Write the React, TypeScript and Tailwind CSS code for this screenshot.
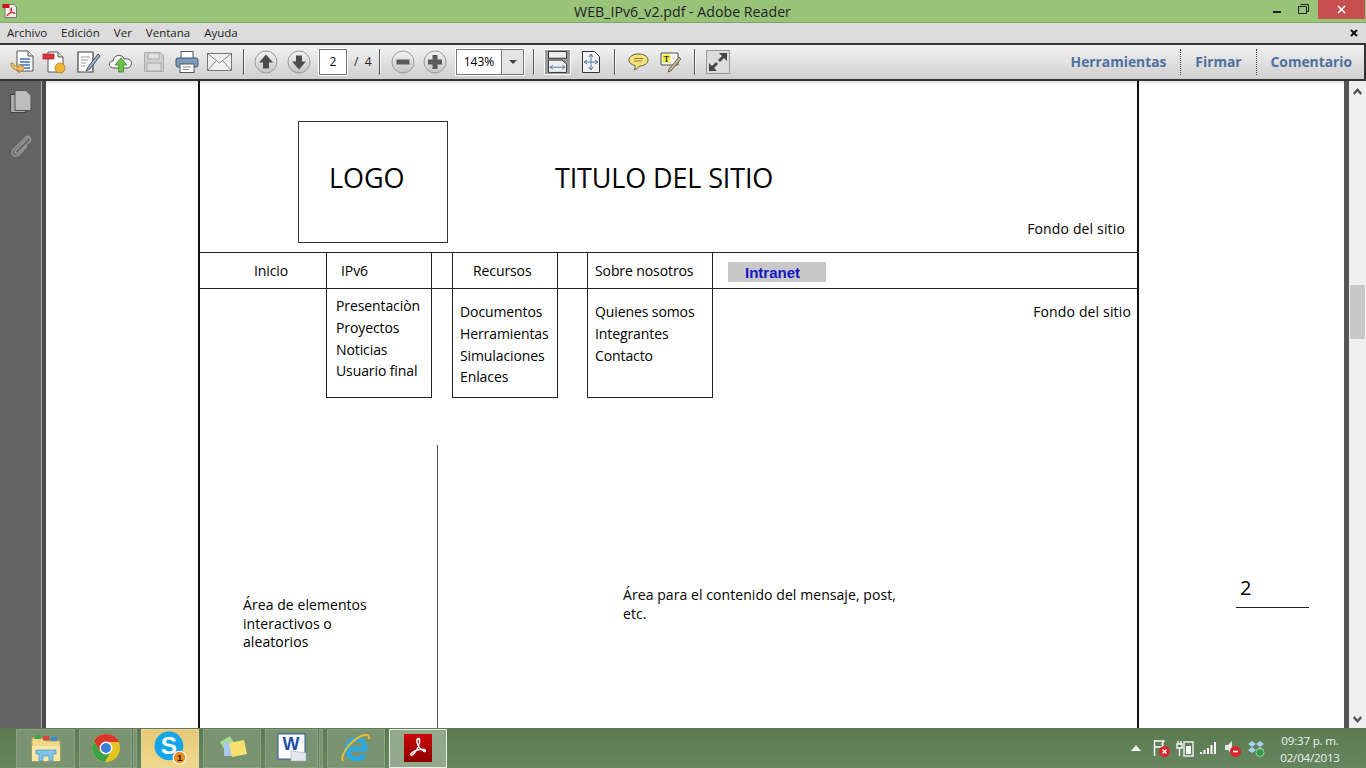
import React from "react";

const uiFont = "font-['Open_Sans','Noto_Sans',sans-serif]";

const AcrobatMark = ({ size = 24 }: { size?: number }) => (
  <svg width={size} height={size} viewBox="0 0 22 22">
    <path d="M12.500 3c.5 4-2.500 11-6 14-1.500 1.200-3 .3-1.500-1.200 3-2.800 9-4.500 12-3.300 1.500.6 1 2-.5 1.500-3-1-6-5-6.500-8.500-.2-2 .5-3 1.200-3.200.5-.1.700.2.800.700Z" fill="none" stroke="#fff" strokeWidth="1.300" />
  </svg>
);

const Sep = ({ className = "" }: { className?: string }) => (
  <div className={`h-[26px] w-[2px] shrink-0 border-l border-l-[#555] bg-white/70 ${className}`} />
);

const RoundBtn = ({ kind }: { kind: "up" | "down" | "minus" | "plus" }) => (
  <svg width="24" height="24" viewBox="0 0 24 24">
    <defs>
      <linearGradient id="rb" x1="0" y1="0" x2="0" y2="1">
        <stop offset="0" stopColor="#f4f4f4" />
        <stop offset="1" stopColor="#c4c4c4" />
      </linearGradient>
    </defs>
    <circle cx="12" cy="12" r="11" fill="url(#rb)" stroke="#9a9a9a" />
    {kind === "up" && <path d="M12 4.500 19 12.500h-4v6H9v-6H5Z" fill="#4c4c4c" />}
    {kind === "down" && <path d="M12 19.500 5 11.500h4v-6h6v6h4Z" fill="#4c4c4c" />}
    {kind === "minus" && <rect x="5.500" y="9.500" width="13" height="5" fill="#5a5a5a" />}
    {kind === "plus" && <path d="M9.500 5h5v4.500H19v5h-4.500V19h-5v-4.500H5v-5h4.500Z" fill="#5a5a5a" />}
  </svg>
);

const ToolIcon = ({ children, w = 33 }: { children: React.ReactNode; w?: number }) => (
  <div className="flex shrink-0 items-center justify-center" style={{ width: w }}>
    {children}
  </div>
);

const Toolbar = () => (
  <div className={`flex h-[38px] shrink-0 items-center border-y-2 border-r-2 border-[#333] bg-gradient-to-b from-[#f2f2f2] to-[#cfcfcf] pl-[5px] ${uiFont}`}>
    <ToolIcon>
      <svg width="26" height="26" viewBox="0 0 26 26">
        <path d="M8 2h11l5 5v15H8Z" fill="#fff" stroke="#555" />
        <path d="M19 2v5h5" fill="#ddd" stroke="#555" />
        <path d="M11 10h10M11 13h10M11 16h10M11 19h10" stroke="#3a6fc0" strokeWidth="1.300" />
        <path d="M2 14c0 5 3 7 8 7v3l6-5-6-4v3c-3 0-5-1-6-4Z" fill="#eebc5a" stroke="#a8782a" strokeWidth=".8" />
      </svg>
    </ToolIcon>
    <ToolIcon>
      <svg width="26" height="26" viewBox="0 0 26 26">
        <path d="M6 3h10l5 5v15H6Z" fill="#fff" stroke="#555" />
        <path d="M16 3v5h5" fill="#ddd" stroke="#555" />
        <rect x="1" y="5" width="11" height="5" fill="#e0333c" stroke="#9b1c22" strokeWidth=".7" />
        <circle cx="18" cy="19" r="5" fill="#efb53a" stroke="#b67f1d" strokeWidth=".8" />
      </svg>
    </ToolIcon>
    <ToolIcon>
      <svg width="26" height="26" viewBox="0 0 26 26">
        <path d="M3 3h15v20H3Z" fill="#fff" stroke="#444" strokeWidth="1.200" />
        <path d="M6 8h9M6 11h7M6 14h5M6 17h4" stroke="#999" />
        <path d="M23 5 13 18l-2 4 4-2L25 7Z" fill="#8fb0d8" stroke="#444" strokeWidth=".9" />
      </svg>
    </ToolIcon>
    <ToolIcon>
      <svg width="26" height="24" viewBox="0 0 26 24">
        <path d="M6 18c-6 0-6-7-1-7 0-6 9-8 11-2 5-1 9 2 7 6-.5 2-2 3-4 3Z" fill="#f5f5f5" stroke="#555" />
        <path d="M13 8l6 7h-3.500v7h-5v-7H7Z" fill="#6cc04a" stroke="#3f8a2a" strokeWidth=".8" />
      </svg>
    </ToolIcon>
    <ToolIcon>
      <svg width="22" height="22" viewBox="0 0 22 22">
        <path d="M1.500 1.500h16l3 3v16h-19Z" fill="#d0d0d0" stroke="#aaa" />
        <rect x="5" y="2" width="11" height="6" fill="#e2e2e2" stroke="#aaa" />
        <rect x="4" y="12" width="14" height="8" fill="#dcdcdc" stroke="#aaa" />
      </svg>
    </ToolIcon>
    <ToolIcon>
      <svg width="24" height="24" viewBox="0 0 24 24">
        <rect x="6" y="1.500" width="12" height="7" fill="#fff" stroke="#555" />
        <rect x="1" y="8" width="22" height="9" rx="2" fill="#7c9cc0" stroke="#44576e" />
        <rect x="5" y="14" width="14" height="8.500" fill="#fff" stroke="#555" />
        <path d="M8 17h8M8 19.500h6" stroke="#888" />
      </svg>
    </ToolIcon>
    <ToolIcon>
      <svg width="25" height="18" viewBox="0 0 25 18">
        <rect x=".5" y=".5" width="24" height="17" fill="#f0f0f0" stroke="#777" />
        <path d="M1 1l11.500 9L24 1M1 17l8-9M24 17l-8-9" fill="none" stroke="#888" />
      </svg>
    </ToolIcon>
    <Sep className="ml-[7px] mr-[4px]" />
    <ToolIcon><RoundBtn kind="up" /></ToolIcon>
    <ToolIcon><RoundBtn kind="down" /></ToolIcon>
    <div className="ml-[4px] flex h-[26px] w-[28px] shrink-0 items-center justify-center border border-[#777] bg-white text-[12px] text-black outline outline-1 outline-white">2</div>
    <div className="ml-[7px] w-[20px] shrink-0 text-[12px] text-[#222]">/&nbsp; 4</div>
    <Sep className="ml-[5px] mr-[6px]" />
    <ToolIcon w={32}><RoundBtn kind="minus" /></ToolIcon>
    <ToolIcon w={32}><RoundBtn kind="plus" /></ToolIcon>
    <div className="ml-[5px] flex h-[26px] w-[68px] shrink-0 border border-[#777] bg-white text-[12px] text-black outline outline-1 outline-white">
      <div className="flex flex-1 items-center justify-center">143%</div>
      <div className="flex w-[22px] items-center justify-center border-l border-l-[#777] bg-[#e4e4e4]">
        <div className="h-0 w-0 border-x-[4px] border-t-[4px] border-x-transparent border-t-[#444]" />
      </div>
    </div>
    <Sep className="mx-[9px]" />
    <div className="flex h-[26px] w-[27px] shrink-0 items-center justify-center border border-white bg-[#9a9a9a]">
      <svg width="19" height="22" viewBox="0 0 20 23">
        <rect x=".5" y=".5" width="19" height="7" fill="#eee" stroke="#333" />
        <path d="M.5 9.500h14l5 4v9H.5Z" fill="#eee" stroke="#333" />
        <path d="M2 17h16M2 17l3-2M2 17l3 2M18 17l-3-2M18 17l-3 2" stroke="#5577aa" />
      </svg>
    </div>
    <ToolIcon w={40}>
      <svg width="18" height="22" viewBox="0 0 18 22">
        <path d="M.5.500h12l5 5v16H.5Z" fill="#f2f2f2" stroke="#333" />
        <path d="M9 3v16M2 11h14M9 3 7 6M9 3l2 3M9 19l-2-3M9 19l2-3M2 11l3-2M2 11l3 2M16 11l-3-2M16 11l-3 2" stroke="#5577aa" />
      </svg>
    </ToolIcon>
    <Sep className="ml-[3px] mr-[2px]" />
    <ToolIcon w={40}>
      <svg width="21" height="18" viewBox="0 0 21 18">
        <path d="M10.500 1C16 1 20 3.500 20 7s-4 6-8.500 6c-1.500 2-3.500 3.500-5.500 4 1-1.500 1.500-3 1-4.500C3 11.500 1 9.500 1 7c0-3.500 4-6 9.500-6Z" fill="#f5e27a" stroke="#5a5a40" />
        <path d="M6 5.500h9M6 8h8" stroke="#8a7a30" />
      </svg>
    </ToolIcon>
    <ToolIcon w={26}>
      <svg width="22" height="22" viewBox="0 0 22 22">
        <path d="M1 2h17v12H1Z" fill="#f4f4f4" stroke="#555" />
        <rect x="2.500" y="3.500" width="8" height="8" fill="#f6ee3c" />
        <text x="6.500" y="10.500" fontSize="8" fontWeight="700" textAnchor="middle" fill="#222" fontFamily="Liberation Serif">T</text>
        <path d="M19 6 9 18l-1 3 3-1L21 8Z" fill="#c9b28a" stroke="#555" strokeWidth=".8" />
      </svg>
    </ToolIcon>
    <Sep className="ml-[10px] mr-[10px]" />
    <div className="flex h-[24px] w-[24px] shrink-0 items-center justify-center border border-[#999] bg-[#dcdcdc]">
      <svg width="20" height="20" viewBox="0 0 20 20">
        <path d="M19 1v8l-3-3-4 4-2-2 4-4-3-3ZM1 19v-8l3 3 4-4 2 2-4 4 3 3Z" fill="#444" />
      </svg>
    </div>
    <div className="ml-auto flex items-center text-[13.800px] font-bold text-[#4f6f9f]">
      <span>Herramientas</span>
      <div className="ml-[14px] h-[26px] border-l border-dotted border-[#444]" />
      <span className="ml-[14px]">Firmar</span>
      <div className="ml-[14px] h-[26px] border-l border-dotted border-[#444]" />
      <span className="ml-[14px] mr-[12px]">Comentario</span>
    </div>
  </div>
);

const ListItem = ({ children }: { children: React.ReactNode }) => (
  <div className="h-[21.800px] leading-[22px]">{children}</div>
);

const PdfPage = () => (
  <div className="h-[700px] w-[941px] shrink-0 border-x-2 border-[#111] text-[14px] tracking-[-0.1px] text-black font-['Open_Sans',sans-serif]">
    <div className="flex h-[171px] pl-[98px] pt-[40px]">
      <div className="flex h-[122px] w-[150px] shrink-0 items-center border border-[#333] pb-[8px] pl-[30px] text-[27px]">LOGO</div>
      <div className="ml-[107px] mt-[39px] text-[27px] leading-[36px] tracking-[-0.15px]">TITULO DEL SITIO</div>
      <div className="ml-auto mr-[12px] mt-[98px] leading-[20px] tracking-[0.15px]">Fondo del sitio</div>
    </div>
    <div className="flex h-[37px] border-y border-[#222] leading-[35px]">
      <div className="w-[126px] shrink-0 pl-[54px]">Inicio</div>
      <div className="w-[106px] shrink-0 border-x border-[#222] pl-[14px]">IPv6</div>
      <div className="ml-[20px] w-[106px] shrink-0 border-x border-[#222] pl-[20px]">Recursos</div>
      <div className="ml-[29px] w-[126px] shrink-0 border-x border-[#222] pl-[7px]">Sobre nosotros</div>
      <div className="ml-[15px] mt-[9px] flex h-[20px] w-[98px] items-center bg-[#c8c8c8] pl-[17px] text-[15px] font-bold tracking-normal text-[#1414c8] font-['Liberation_Sans',sans-serif]">Intranet</div>
    </div>
    <div className="flex h-[109px]">
      <div className="ml-[126px] w-[106px] shrink-0 border-x border-b border-[#222] pl-[9px] pt-[6px]">
        <ListItem>Presentaciòn</ListItem>
        <ListItem>Proyectos</ListItem>
        <ListItem>Noticias</ListItem>
        <ListItem>Usuario final</ListItem>
      </div>
      <div className="ml-[20px] w-[106px] shrink-0 border-x border-b border-[#222] pl-[7px] pt-[12px]">
        <ListItem>Documentos</ListItem>
        <ListItem>Herramientas</ListItem>
        <ListItem>Simulaciones</ListItem>
        <ListItem>Enlaces</ListItem>
      </div>
      <div className="ml-[29px] w-[126px] shrink-0 border-x border-b border-[#222] pl-[7px] pt-[12px]">
        <ListItem>Quienes somos</ListItem>
        <ListItem>Integrantes</ListItem>
        <ListItem>Contacto</ListItem>
      </div>
      <div className="ml-auto mr-[6px] pt-[13px] leading-[20px] tracking-[0.15px]">Fondo del sitio</div>
    </div>
    <div className="mt-[47px] flex h-[300px] tracking-[0.07px]">
      <div className="w-[238px] shrink-0 border-r border-[#555] pl-[43px] pt-[151px] leading-[18.500px]">
        Área de elementos
        <br />
        interactivos o
        <br />
        aleatorios
      </div>
      <div className="pl-[185px] pt-[140px] leading-[19px]">
        Área para el contenido del mensaje, post,
        <br />
        etc.
      </div>
    </div>
  </div>
);

const Scrollbar = () => (
  <div className="flex w-[17px] shrink-0 flex-col items-center bg-[#f0f0f0] pb-[5px] pt-[7px]">
    <svg width="9" height="7" viewBox="0 0 9 7">
      <path d="M4.500 0 9 5 7.500 7 4.500 3.500 1.500 7 0 5Z" fill="#555" />
    </svg>
    <div className="mt-[190px] h-[54px] w-[15px] bg-[#c8c8c8]" />
    <svg className="mt-auto" width="9" height="7" viewBox="0 0 9 7">
      <path d="M4.500 7 9 2 7.500 0 4.500 3.500 1.500 0 0 2Z" fill="#555" />
    </svg>
  </div>
);

const TaskBtn = ({ children, w, stacked, variant = "normal" }: { children: React.ReactNode; w: number; stacked?: boolean; variant?: "normal" | "alert" | "active" }) => {
  const cls =
    variant === "alert"
      ? "border-[#e8d79a] bg-gradient-to-b from-[#e6c878] to-[#f0d88e]"
      : variant === "active"
      ? "border-[#e8efe4] bg-[#93a88c]"
      : "border-[#8aa184] bg-[#7a9472]";
  return (
    <div className="flex h-[39px] shrink-0 gap-[1px]">
      <div className={`flex h-full items-center justify-center border ${cls}`} style={{ width: w }}>
        {children}
      </div>
      {stacked && <div className="h-full w-[4px] border border-[#8aa184] bg-[#7a9472]" />}
    </div>
  );
};

const Taskbar = () => (
  <div className={`flex h-[40px] shrink-0 items-center bg-gradient-to-b from-[#5a7a50] to-[#668660] pl-[16px] ${uiFont}`}>
    <div className="flex items-center gap-[4px]">
      <TaskBtn w={59}>
        <svg width="32" height="32" viewBox="0 0 32 32">
          <path d="M2 6h10l2 3h16v20H2Z" fill="#f0d78a" stroke="#c9a552" />
          <rect x="5" y="3" width="6" height="4" fill="#3ca648" />
          <rect x="13" y="4" width="6" height="4" fill="#d8443a" />
          <rect x="21" y="5" width="6" height="4" fill="#3a88d8" />
          <path d="M2 14h28v15H2Z" fill="#f8e6a8" />
          <path d="M6 18h20v4h-3v7h-4v-5h-6v5H9v-7H6Z" fill="#7fc4e8" stroke="#4a94bc" strokeWidth=".7" />
        </svg>
      </TaskBtn>
      <TaskBtn w={53} stacked>
        <svg width="30" height="30" viewBox="0 0 30 30">
          <circle cx="15" cy="15" r="14" fill="#e8c21e" />
          <path d="M15 1A14 14 0 0 0 3 8l6 11 6-10h13A14 14 0 0 0 15 1Z" fill="#d9372c" />
          <path d="M3 8A14 14 0 0 0 14 29l6-11-11 1Z" fill="#3aa34a" />
          <circle cx="15" cy="15" r="6.500" fill="#fff" />
          <circle cx="15" cy="15" r="5" fill="#3f7fdc" />
        </svg>
      </TaskBtn>
      <TaskBtn w={58} variant="alert">
        <svg width="34" height="34" viewBox="0 0 32 32">
          <circle cx="15" cy="14" r="13.500" fill="#12a5e8" />
          <text x="15" y="22" fontSize="23" fontWeight="700" textAnchor="middle" fill="#fff" fontFamily="Liberation Sans">S</text>
          <circle cx="25" cy="25" r="6" fill="#f08a1c" stroke="#fff" />
          <text x="25" y="28.500" fontSize="9" fontWeight="700" textAnchor="middle" fill="#222" fontFamily="Liberation Sans">1</text>
        </svg>
      </TaskBtn>
      <TaskBtn w={58}>
        <svg width="32" height="28" viewBox="0 0 32 28">
          <path d="M4 8 14 2l6 10-10 6Z" fill="#a8dc90" />
          <path d="M8 8h12v14H8Z" fill="#a8c8ec" />
          <path d="M13 9 28 6l3 14-15 3Z" fill="#f8e070" />
        </svg>
      </TaskBtn>
      <TaskBtn w={53} stacked>
        <svg width="30" height="30" viewBox="0 0 30 30">
          <path d="M1 1h27v25H1Z" fill="#fff" stroke="#2a56a8" />
          <rect x="2.500" y="2.500" width="24" height="15" fill="#fff" />
          <text x="14" y="17" fontSize="18" fontWeight="700" textAnchor="middle" fill="#1d4fa8" fontFamily="Liberation Sans">W</text>
          <path d="M14 18 29 20v8H14Z" fill="#e4e8ef" stroke="#aab" strokeWidth=".6" />
        </svg>
      </TaskBtn>
      <TaskBtn w={58}>
        <svg width="32" height="32" viewBox="0 0 32 32">
          <path d="M8 17h17c0-6-3.500-10-8.500-10S7 11.500 7 17s4 10 9.500 10c3.500 0 6.500-1.500 8-4.500" fill="none" stroke="#29a9e8" strokeWidth="4.500" />
          <path d="M3 29C0 25 8 11 19 5c6-3 11-3 10 2" fill="none" stroke="#e8bc2c" strokeWidth="2" />
        </svg>
      </TaskBtn>
      <TaskBtn w={58} variant="active">
        <div className="flex h-[28px] w-[28px] items-center justify-center bg-gradient-to-b from-[#cc0a0a] to-[#8c0000]">
          <AcrobatMark />
        </div>
      </TaskBtn>
    </div>
    <div className="ml-auto flex items-center">
      <svg width="10" height="6" viewBox="0 0 10 6"><path d="M5 0 10 6H0Z" fill="#f4f4f4" /></svg>
      <svg className="ml-[12px]" width="17" height="17" viewBox="0 0 17 17">
        <path d="M1.500 0v16M2 1h9l-2 3 2 3H2" fill="none" stroke="#fff" strokeWidth="1.400" />
        <circle cx="11.500" cy="11.500" r="5.500" fill="#d8262c" />
        <path d="M9.500 9.500l4 4M13.500 9.500l-4 4" stroke="#fff" strokeWidth="1.300" />
      </svg>
      <svg className="ml-[6px]" width="18" height="17" viewBox="0 0 18 17">
        <path d="M2 1v3M5 1v3M1 4h5v4H1ZM3.500 8v8" fill="none" stroke="#fff" strokeWidth="1.300" />
        <rect x="8" y="2" width="9" height="14" fill="none" stroke="#fff" strokeWidth="1.300" />
        <rect x="10" y="6" width="5" height="8" fill="#fff" />
      </svg>
      <svg className="ml-[6px]" width="16" height="12" viewBox="0 0 16 12">
        <path d="M0 10h2v2H0ZM3.500 8h2v4h-2ZM7 6h2v6H7ZM10.500 3h2v9h-2ZM14 0h2v12h-2Z" fill="#fff" />
      </svg>
      <svg className="ml-[8px]" width="17" height="17" viewBox="0 0 17 17">
        <path d="M1 5h3l4-4v13L4 10H1Z" fill="#e8e8e8" />
        <circle cx="11.500" cy="11.500" r="5.500" fill="#d8262c" />
        <path d="M9 11.500h5" stroke="#fff" strokeWidth="1.600" />
      </svg>
      <svg className="ml-[7px]" width="17" height="17" viewBox="0 0 17 17">
        <path d="M4 1 8 4 4 7 0 4ZM12 1l4 3-4 3-4-3ZM4 7l4 3-4 3-4-3ZM12 7l4 3-4 3-4-3Z" fill="#a8d4f0" />
        <circle cx="12" cy="12.500" r="4" fill="#2e9c46" stroke="#fff" strokeWidth=".5" />
      </svg>
      <div className="ml-[14px] w-[68px] whitespace-nowrap pr-[6px] pt-[2px] text-center text-[11.600px] leading-[17px] tracking-[-0.2px] text-[#f0f0f0]">
        <div>09:37 p. m.</div>
        <div>02/04/2013</div>
      </div>
      <div className="w-[19px]" />
    </div>
  </div>
);

const App: React.FC = () => {
  return (
    <div className={`flex h-[768px] w-[1366px] flex-col overflow-hidden bg-white ${uiFont}`}>
      <div className="flex h-[23px] shrink-0 items-center border-b border-[#7fa862] bg-[#98c379]">
        <svg className="ml-[2px] shrink-0" width="16" height="16" viewBox="0 0 16 16">
          <path d="M3 1.500h9l2.500 2.500v10.500H3Z" fill="#f6f0ea" stroke="#777" />
          <rect x=".5" y="1" width="7" height="4" fill="#c8141c" />
          <path d="M9.500 5c.3 2.500-1.500 6-3.500 7.500-1 .7-1.500-.2-.8-.8C7 10 10.500 9 12.500 9.800c.8.3.4 1-.4.800C10.500 10 9 8 8.800 6c-.1-1 .700-1.500.7-1Z" fill="none" stroke="#d02020" strokeWidth="1" />
        </svg>
        <div className="flex-1 pl-[74px] pt-[2px] text-center text-[14.200px] leading-[22px] text-[#222]">WEB_IPv6_v2.pdf - Adobe Reader</div>
        <div className="flex h-full items-start">
          <div className="mr-[17px] mt-[11px] h-[2px] w-[8px] bg-[#222]" />
          <svg className="mr-[9px] mt-[4px]" width="11" height="10" viewBox="0 0 11 10">
            <path d="M2.500.500h8v7h-2M.500 2.500h8v7h-8Z" fill="none" stroke="#222" />
          </svg>
          <div className="flex h-[19px] w-[47px] items-center justify-center bg-[#c75050] text-white">
            <svg width="9" height="9" viewBox="0 0 9 9">
              <path d="M1 1l7 7M8 1 1 8" stroke="#fff" strokeWidth="1.600" />
            </svg>
          </div>
          <div className="w-[1px]" />
        </div>
      </div>
      <div className="flex h-[20px] shrink-0 items-center gap-[14px] bg-[#dcdcdc] pb-[1px] pl-[7px] text-[11.500px] text-[#1c1c1c]">
        <span>Archivo</span>
        <span>Edición</span>
        <span>Ver</span>
        <span>Ventana</span>
        <span>Ayuda</span>
        <svg className="ml-auto mr-[8px]" width="8" height="8" viewBox="0 0 8 8">
          <path d="M1 1l6 6M7 1 1 7" stroke="#111" strokeWidth="2" />
        </svg>
      </div>
      <Toolbar />
      <div className="flex min-h-0 flex-1">
        <div className="flex w-[42px] shrink-0 flex-col items-center border-r border-r-[#aaa] bg-[#636363] pt-[9px]">
          <svg width="22" height="23" viewBox="0 0 22 23">
            <rect x=".5" y="4.500" width="15" height="18" fill="#aaa" stroke="#444" />
            <path d="M5 .5h11l5 5v15H5Z" fill="#bdbdbd" stroke="#555" />
          </svg>
          <svg className="mt-[20px]" width="22" height="24" viewBox="0 0 22 24">
            <path d="M19 4 6 17c-2 2 0 5 2 3L20 8c2-3-2-6-4-4L3 17c-3 4 2 8 6 5l8-9" fill="none" stroke="#999" strokeWidth="1.500" />
          </svg>
        </div>
        <div className="w-[4px] shrink-0 bg-[#4a4a4a]" />
        <div className="relative flex min-w-0 flex-1 overflow-hidden bg-white pl-[152px]">
          <div className="absolute inset-x-0 top-0 h-[4px] bg-gradient-to-b from-[#dedede] to-transparent" />
          <div className="relative flex">
            <PdfPage />
            <div className="ml-[97px] mt-[494px] w-[73px] shrink-0 self-start border-b border-[#222] pb-[6px] pl-[4px] text-[20px] leading-[26px] text-black">2</div>
          </div>
        </div>
        <div className="w-[5px] shrink-0 bg-[#555]" />
        <Scrollbar />
      </div>
      <Taskbar />
    </div>
  );
};

export default App;
